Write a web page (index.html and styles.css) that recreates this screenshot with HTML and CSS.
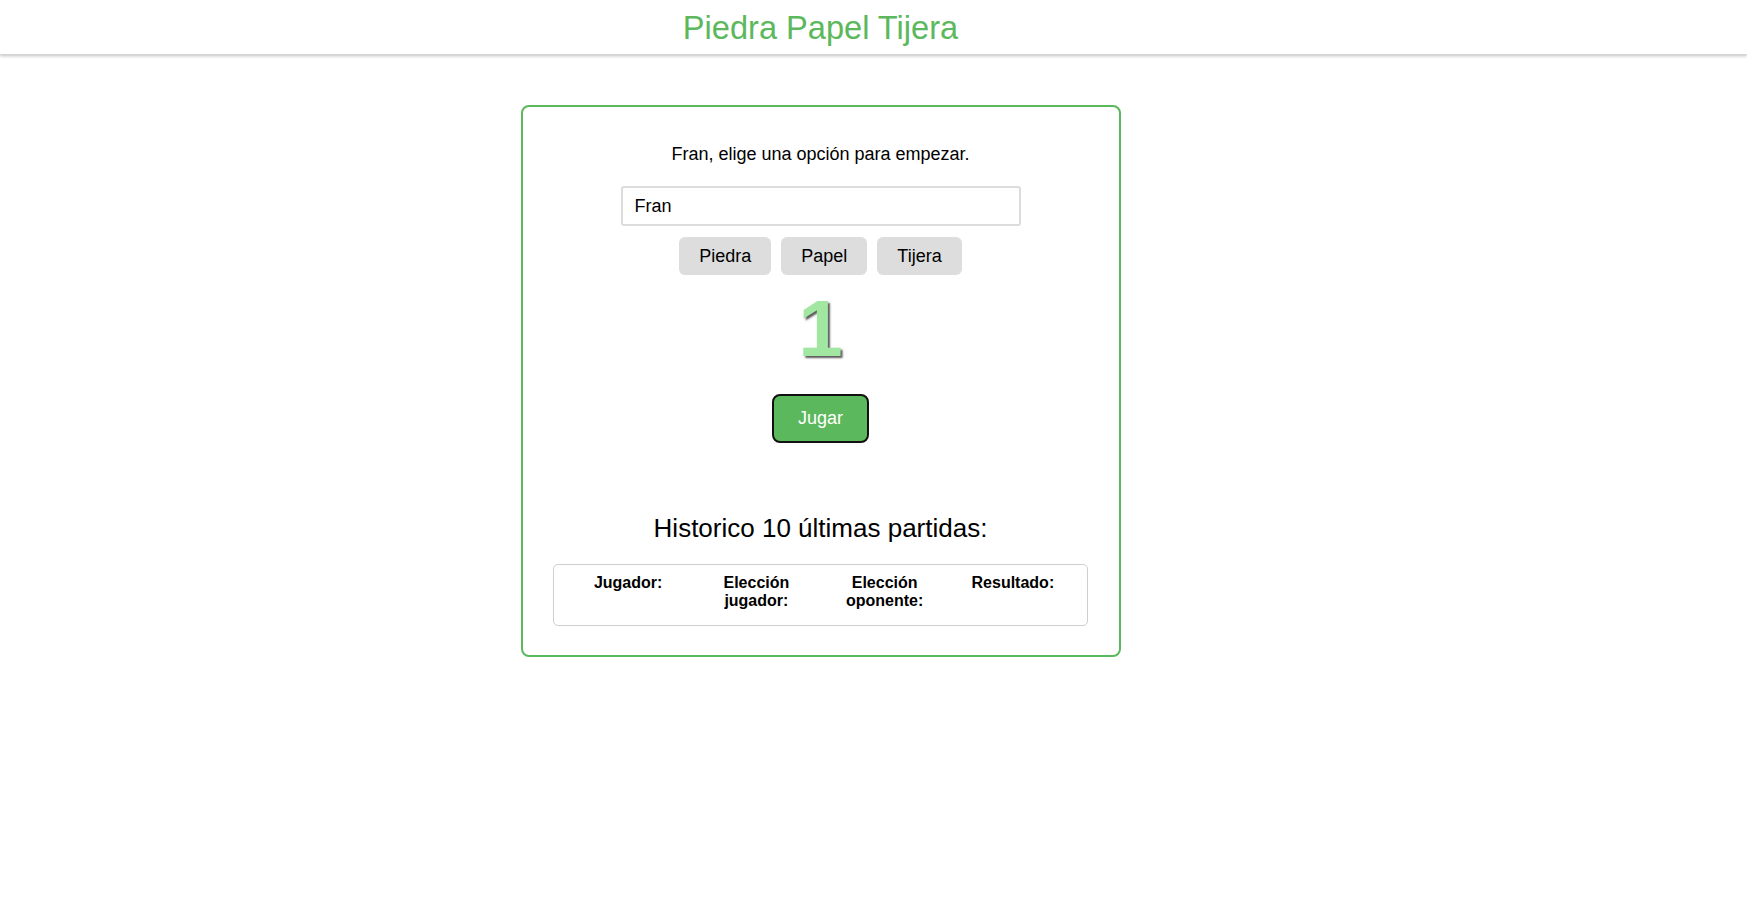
FILE: index.html
```html
<!DOCTYPE html>
<html lang="es">
<head>
<meta charset="utf-8">
<title>Piedra Papel Tijera</title>
<link rel="stylesheet" href="styles.css">
</head>
<body>
<header class="topbar">
  <div class="topbar-inner">
    <h1 class="title">Piedra Papel Tijera</h1>
  </div>
</header>
<main class="page">
  <section class="card">
    <p class="prompt">Fran, elige una opción para empezar.</p>
    <input class="name-input" type="text" value="Fran">
    <div class="choices">
      <button class="choice">Piedra</button>
      <button class="choice">Papel</button>
      <button class="choice">Tijera</button>
    </div>
    <div class="counter">1</div>
    <button class="play">Jugar</button>
    <h2 class="history-title">Historico 10 últimas partidas:</h2>
    <div class="history-box">
      <table class="history">
        <thead>
          <tr>
            <th>Jugador:</th>
            <th>Elección jugador:</th>
            <th>Elección oponente:</th>
            <th>Resultado:</th>
          </tr>
        </thead>
        <tbody></tbody>
      </table>
    </div>
  </section>
</main>
</body>
</html>
```
FILE: styles.css
```css
html, body {
  margin: 0;
  padding: 0;
  background: #fff;
}

body {
  font-family: "Liberation Sans", Arial, sans-serif;
  color: #000;
}

.topbar {
  height: 55px;
  background: #fff;
  box-shadow: 0 1px 3px rgba(0, 0, 0, 0.25);
  border-bottom: 1px solid #d6d6d6;
  box-sizing: border-box;
}

.topbar-inner {
  width: 1641px;
  display: flex;
  justify-content: center;
}

.title {
  margin: 0;
  padding-top: 9px;
  font-size: 32.6px;
  font-weight: normal;
  line-height: 37px;
  color: #5cb85c;
}

.page {
  width: 1641px;
  display: flex;
  flex-direction: column;
  align-items: center;
}

.card {
  margin-top: 50px;
  width: 600px;
  box-sizing: border-box;
  border: 2px solid #5cb85c;
  border-radius: 8px;
  padding: 37px 44px 29px;
  display: flex;
  flex-direction: column;
  align-items: center;
}

.prompt {
  margin: 0;
  font-size: 18px;
  line-height: 21px;
}

.name-input {
  margin-top: 21px;
  width: 400px;
  height: 40px;
  box-sizing: border-box;
  border: 2px solid #dcdcdc;
  border-radius: 3px;
  padding: 0 12px;
  font-family: "Liberation Sans", Arial, sans-serif;
  font-size: 18px;
  color: #000;
  outline: none;
}

.choices {
  margin-top: 11px;
  display: flex;
  gap: 10px;
}

.choice {
  height: 38px;
  padding: 0 20px;
  border: none;
  border-radius: 6px;
  background: #dddddd;
  font-family: "Liberation Sans", Arial, sans-serif;
  font-size: 18px;
  color: #000;
  cursor: pointer;
}

.counter {
  margin-top: 14px;
  font-size: 80px;
  line-height: 80px;
  font-weight: bold;
  color: #a1e6a1;
  text-shadow: 2px 2px 2px rgba(0, 0, 0, 0.65);
}

.play {
  margin-top: 25px;
  width: 97px;
  height: 49px;
  box-sizing: border-box;
  border: 2px solid #111;
  border-radius: 8px;
  background: #5cb85c;
  color: #fff;
  font-family: "Liberation Sans", Arial, sans-serif;
  font-size: 18px;
  padding: 0;
  cursor: pointer;
}

.history-title {
  margin: 70px 0 0;
  font-size: 26px;
  line-height: 30px;
  font-weight: normal;
}

.history-box {
  margin-top: 21px;
  width: 535px;
  box-sizing: border-box;
  border: 1px solid #cfcfcf;
  border-radius: 5px;
  padding: 9px 10px 15px;
}

.history {
  width: 100%;
  table-layout: fixed;
  border-collapse: collapse;
}

.history th {
  padding: 0;
  font-size: 16px;
  line-height: 18px;
  font-weight: bold;
  text-align: center;
  vertical-align: top;
}
```
